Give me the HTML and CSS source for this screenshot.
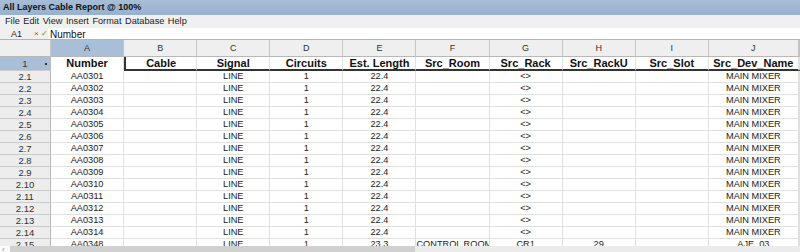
FILE: index.html
```html
<!DOCTYPE html>
<html>
<head>
<meta charset="utf-8">
<link rel="stylesheet" href="styles.css">
</head>
<body>
<div class="app">
  <div class="title">All Layers Cable Report @ 100%</div>
  <div class="menu">
    <span>File</span><span>Edit</span><span>View</span><span>Insert</span><span>Format</span><span>Database</span><span>Help</span>
  </div>
  <div class="formula">
    <div class="namebox">A1</div>
    <div class="fx"><span class="cancel">×</span><span class="ok">✓</span></div>
    <div class="input">Number</div>
  </div>
  <div class="sheet">
    <div class="grid">
      <div class="ch corner"></div><div class="ch sel">A</div><div class="ch">B</div><div class="ch">C</div><div class="ch">D</div><div class="ch">E</div><div class="ch">F</div><div class="ch">G</div><div class="ch">H</div><div class="ch">I</div><div class="ch">J</div><div class="ch"></div>

      <div class="rh rsel">1<span class="mark"></span></div><div class="c hd a1">Number</div><div class="c hd b1">Cable</div><div class="c hd hb">Signal</div><div class="c hd hb">Circuits</div><div class="c hd hb">Est. Length</div><div class="c hd hb">Src_Room</div><div class="c hd hb">Src_Rack</div><div class="c hd hb">Src_RackU</div><div class="c hd hb">Src_Slot</div><div class="c hd hb">Src_Dev_Name</div><div class="c hd hb"></div>

      <div class="rh">2.1</div><div class="c">AA0301</div><div class="c"></div><div class="c">LINE</div><div class="c">1</div><div class="c">22.4</div><div class="c"></div><div class="c">&lt;&gt;</div><div class="c"></div><div class="c"></div><div class="c">MAIN MIXER</div><div class="c"></div>
      <div class="rh">2.2</div><div class="c">AA0302</div><div class="c"></div><div class="c">LINE</div><div class="c">1</div><div class="c">22.4</div><div class="c"></div><div class="c">&lt;&gt;</div><div class="c"></div><div class="c"></div><div class="c">MAIN MIXER</div><div class="c"></div>
      <div class="rh">2.3</div><div class="c">AA0303</div><div class="c"></div><div class="c">LINE</div><div class="c">1</div><div class="c">22.4</div><div class="c"></div><div class="c">&lt;&gt;</div><div class="c"></div><div class="c"></div><div class="c">MAIN MIXER</div><div class="c"></div>
      <div class="rh">2.4</div><div class="c">AA0304</div><div class="c"></div><div class="c">LINE</div><div class="c">1</div><div class="c">22.4</div><div class="c"></div><div class="c">&lt;&gt;</div><div class="c"></div><div class="c"></div><div class="c">MAIN MIXER</div><div class="c"></div>
      <div class="rh">2.5</div><div class="c">AA0305</div><div class="c"></div><div class="c">LINE</div><div class="c">1</div><div class="c">22.4</div><div class="c"></div><div class="c">&lt;&gt;</div><div class="c"></div><div class="c"></div><div class="c">MAIN MIXER</div><div class="c"></div>
      <div class="rh">2.6</div><div class="c">AA0306</div><div class="c"></div><div class="c">LINE</div><div class="c">1</div><div class="c">22.4</div><div class="c"></div><div class="c">&lt;&gt;</div><div class="c"></div><div class="c"></div><div class="c">MAIN MIXER</div><div class="c"></div>
      <div class="rh">2.7</div><div class="c">AA0307</div><div class="c"></div><div class="c">LINE</div><div class="c">1</div><div class="c">22.4</div><div class="c"></div><div class="c">&lt;&gt;</div><div class="c"></div><div class="c"></div><div class="c">MAIN MIXER</div><div class="c"></div>
      <div class="rh">2.8</div><div class="c">AA0308</div><div class="c"></div><div class="c">LINE</div><div class="c">1</div><div class="c">22.4</div><div class="c"></div><div class="c">&lt;&gt;</div><div class="c"></div><div class="c"></div><div class="c">MAIN MIXER</div><div class="c"></div>
      <div class="rh">2.9</div><div class="c">AA0309</div><div class="c"></div><div class="c">LINE</div><div class="c">1</div><div class="c">22.4</div><div class="c"></div><div class="c">&lt;&gt;</div><div class="c"></div><div class="c"></div><div class="c">MAIN MIXER</div><div class="c"></div>
      <div class="rh">2.10</div><div class="c">AA0310</div><div class="c"></div><div class="c">LINE</div><div class="c">1</div><div class="c">22.4</div><div class="c"></div><div class="c">&lt;&gt;</div><div class="c"></div><div class="c"></div><div class="c">MAIN MIXER</div><div class="c"></div>
      <div class="rh">2.11</div><div class="c">AA0311</div><div class="c"></div><div class="c">LINE</div><div class="c">1</div><div class="c">22.4</div><div class="c"></div><div class="c">&lt;&gt;</div><div class="c"></div><div class="c"></div><div class="c">MAIN MIXER</div><div class="c"></div>
      <div class="rh">2.12</div><div class="c">AA0312</div><div class="c"></div><div class="c">LINE</div><div class="c">1</div><div class="c">22.4</div><div class="c"></div><div class="c">&lt;&gt;</div><div class="c"></div><div class="c"></div><div class="c">MAIN MIXER</div><div class="c"></div>
      <div class="rh">2.13</div><div class="c">AA0313</div><div class="c"></div><div class="c">LINE</div><div class="c">1</div><div class="c">22.4</div><div class="c"></div><div class="c">&lt;&gt;</div><div class="c"></div><div class="c"></div><div class="c">MAIN MIXER</div><div class="c"></div>
      <div class="rh">2.14</div><div class="c">AA0314</div><div class="c"></div><div class="c">LINE</div><div class="c">1</div><div class="c">22.4</div><div class="c"></div><div class="c">&lt;&gt;</div><div class="c"></div><div class="c"></div><div class="c">MAIN MIXER</div><div class="c"></div>
      <div class="rh">2.15</div><div class="c">AA0348</div><div class="c"></div><div class="c">LINE</div><div class="c">1</div><div class="c">23.3</div><div class="c">CONTROL ROOM</div><div class="c">CR1</div><div class="c">29</div><div class="c"></div><div class="c">AJE_03</div><div class="c"></div>
    </div>
  </div>
  <div class="hscroll">
    <div class="arrow">‹</div>
    <div class="thumb"></div>
    <div class="track"></div>
  </div>
</div>
</body>
</html>
```

FILE: styles.css
```css
html, body {
  margin: 0;
  padding: 0;
  overflow: hidden;
  background: #ffffff;
}
body {
  font-family: "Liberation Sans", Arial, sans-serif;
  color: #1e1e1e;
}
.app {
  width: 800px;
  height: 252px;
  overflow: hidden;
  display: flex;
  flex-direction: column;
}
.title {
  height: 15px;
  flex: none;
  background: linear-gradient(#a6bdd8, #98b1ce);
  font-weight: bold;
  font-size: 9px;
  line-height: 15px;
  padding-left: 3px;
  color: #111;
  white-space: nowrap;
}
.menu {
  height: 13px;
  flex: none;
  background: #f0f0f0;
  display: flex;
  gap: 3.5px;
  padding-left: 5px;
  font-size: 9.2px;
  line-height: 13px;
  color: #222;
}
.formula {
  height: 12px;
  flex: none;
  display: flex;
  background: #f0f0f0;
  border-bottom: 1px solid #b4b4b4;
  box-sizing: border-box;
}
.namebox {
  width: 23px;
  padding-left: 11px;
  font-size: 9px;
  line-height: 12px;
  color: #222;
}
.fx {
  width: 14px;
  display: flex;
  gap: 2px;
  font-size: 8px;
  line-height: 11px;
}
.cancel { color: #d23a3a; }
.ok { color: #3b9a3b; }
.input {
  flex: 1;
  background: #ffffff;
  font-size: 10px;
  line-height: 13px;
  padding-left: 2px;
  overflow: hidden;
  color: #111;
}
.sheet {
  height: 206px;
  flex: none;
  overflow: hidden;
}
.grid {
  display: grid;
  grid-template-columns: 51px repeat(9, 73.1px) 90px 1fr;
  grid-template-rows: 17px 14px;
  grid-auto-rows: 12px;
}
.grid > div {
  box-sizing: border-box;
  overflow: hidden;
  white-space: nowrap;
  text-align: center;
}
.ch {
  background: #efefef;
  border-right: 1px solid #c4c4c4;
  border-bottom: 1px solid #b8b8b8;
  font-size: 9px;
  line-height: 16px;
  color: #333;
}
.ch.sel {
  background: #a9bfd7;
}
.rh {
  background: #ededed;
  border-right: 1px solid #b8b8b8;
  border-bottom: 1px solid #cacaca;
  font-size: 9.5px;
  line-height: 11px;
  color: #333;
  position: relative;
}
.rh.rsel {
  background: #a9bfd7;
  line-height: 13px;
}
.mark {
  position: absolute;
  right: 3px;
  top: 6px;
  width: 2px;
  height: 2px;
  background: #333;
}
.c {
  border-right: 1px solid #e0e0e0;
  border-bottom: 1px solid #e0e0e0;
  font-size: 9.2px;
  line-height: 11px;
  color: #222;
}
.c.hd {
  font-weight: bold;
  font-size: 11px;
  line-height: 13px;
  color: #111;
}
.c.hb {
  border-bottom: 2px solid #333;
}
.c.b1 {
  border-left: 2px solid #333;
  border-bottom: 2px solid #333;
}
.c.a1 {
  border-bottom: 1px solid #ffffff;
}
.hscroll {
  height: 16px;
  flex: none;
  display: flex;
  background: #ebebeb;
}
.arrow {
  width: 10px;
  background: #fafafa;
  font-size: 8px;
  line-height: 8px;
  color: #888;
  padding-left: 2px;
  box-sizing: border-box;
}
.thumb {
  width: 405px;
  background: #d0d0d0;
}
.track {
  flex: 1;
  background: #ebebeb;
}
```
